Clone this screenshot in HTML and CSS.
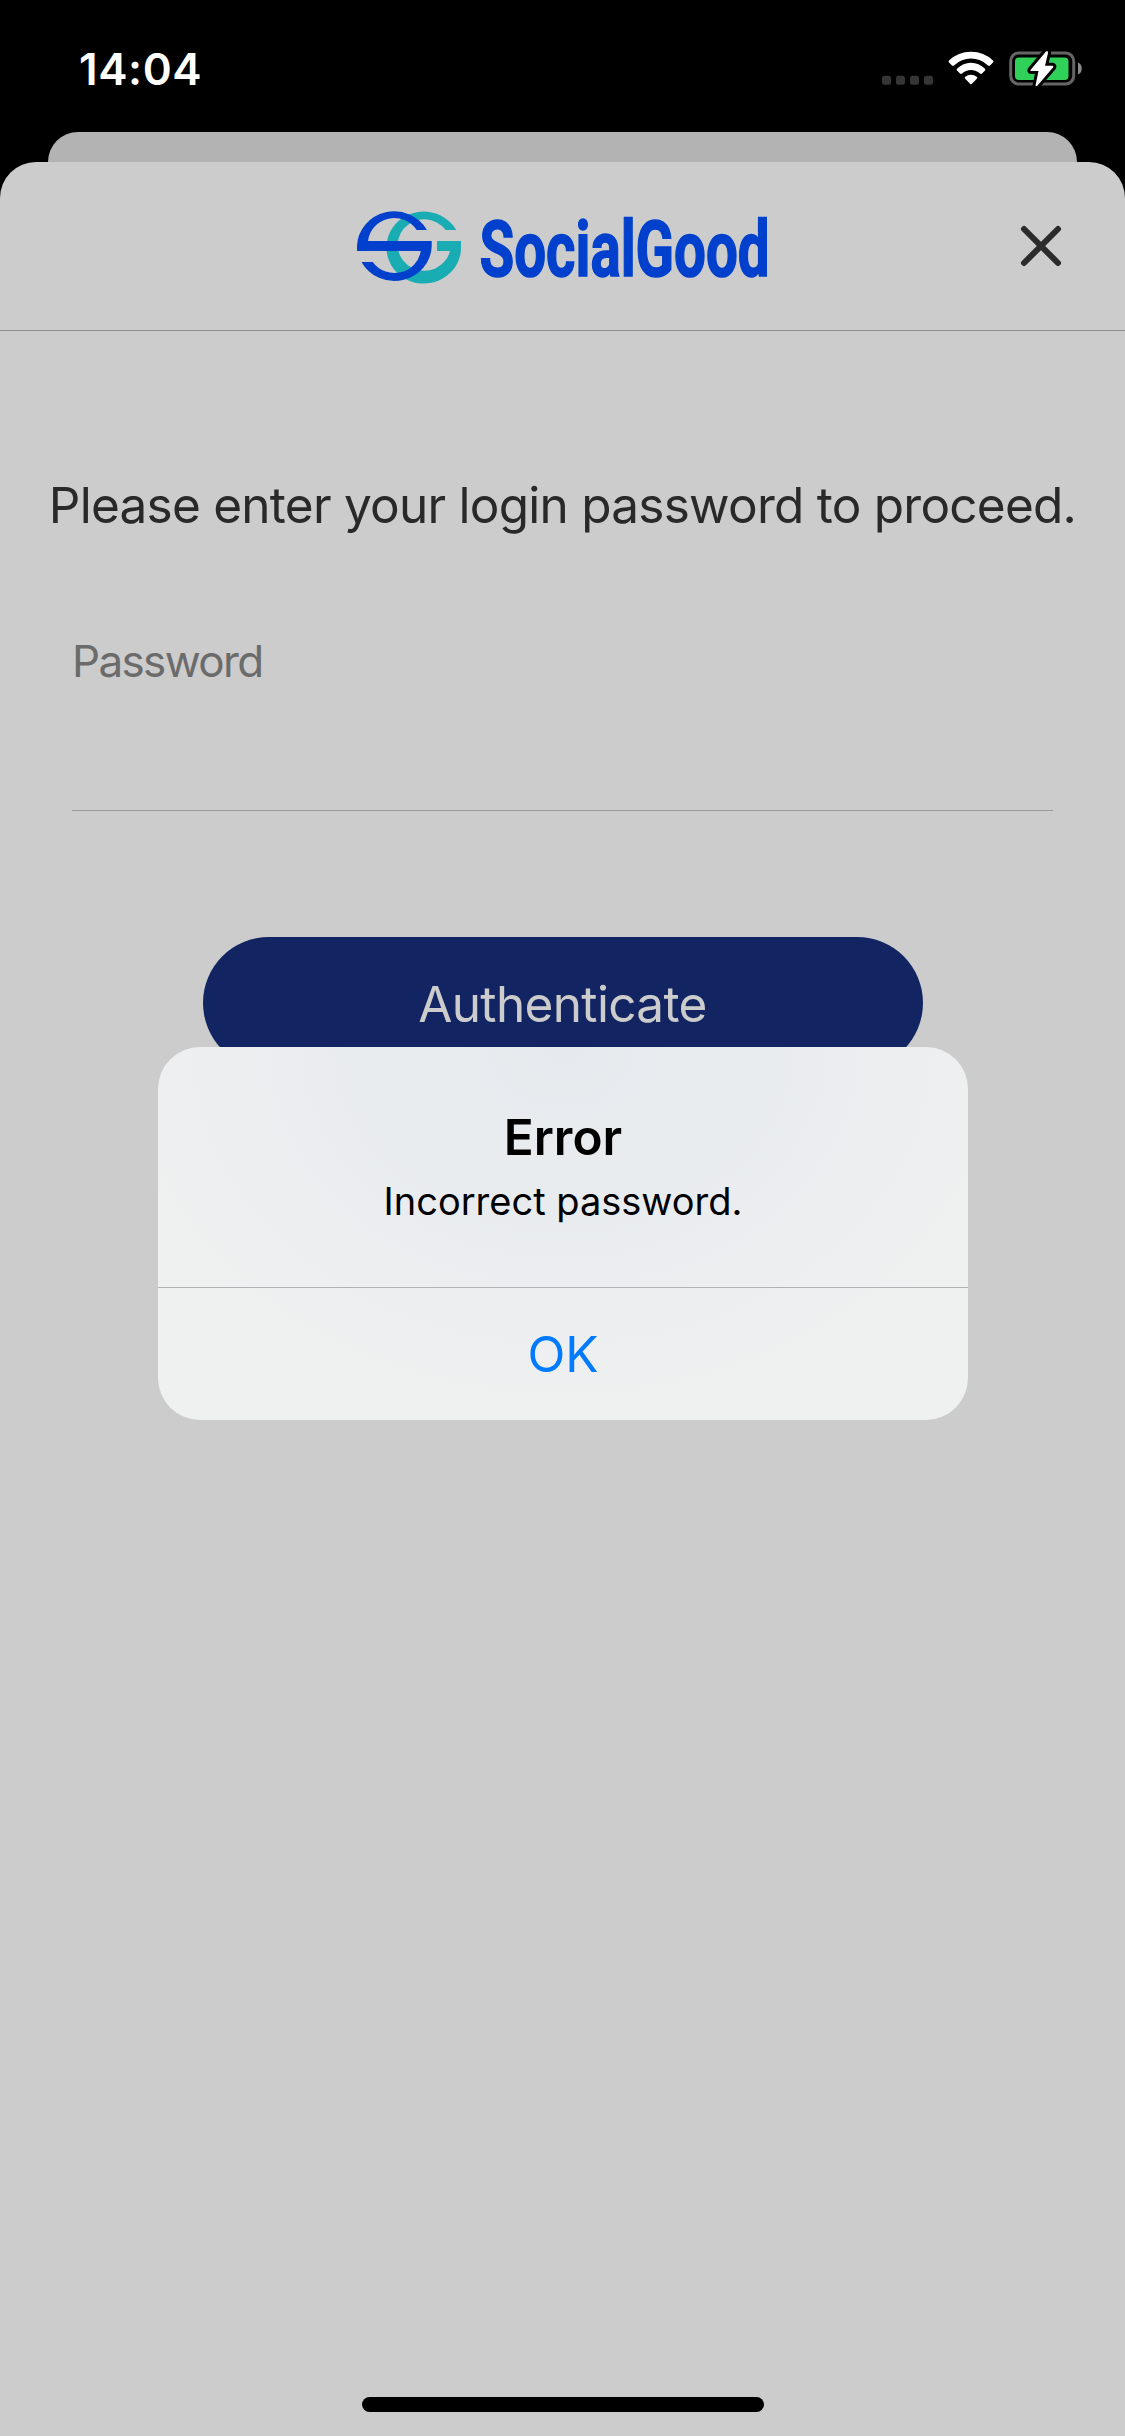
FILE: index.html
```html
<!DOCTYPE html>
<html lang="en">
<head>
<meta charset="utf-8">
<title>SocialGood</title>
<link rel="stylesheet" href="styles.css">
</head>
<body>
<div class="screen">
  <div class="status-bar">
    <span class="time">14:04</span>
    <svg class="status-icons" width="204" height="44" viewBox="0 0 204 44">
      <g fill="#353535"><rect y="28.700" width="9" height="9" rx="2.500"/><rect x="14" y="28.700" width="9" height="9" rx="2.500"/><rect x="28" y="28.700" width="9" height="9" rx="2.500"/><rect x="42" y="28.700" width="9" height="9" rx="2.500"/></g>
      <g fill="#fff">
        <path d="M67 15.500Q66 14.500 67 13.500Q76 4.700 89 4.700T111 13.500Q112 14.500 111 15.500L108 18.500Q107 19.300 106 18.500Q98.500 11.600 89 11.600T72 18.500Q71 19.300 70 18.500Z"/>
        <path d="M75 23.500Q74.200 22.700 75 21.800Q81 15.700 89 15.700T103 21.800Q103.800 22.700 103 23.500L100 26.600Q99 27.400 98 26.600Q94.200 23 89 23T80 26.600Q79 27.400 78 26.600Z"/>
        <path d="M83 31.500Q82.300 30.500 83.300 29.700Q85.800 27.700 89 27.700T94.700 29.700Q95.700 30.500 95 31.500L89.700 37Q89 37.600 88.300 37Z"/>
      </g>
      <rect x="128.700" y="6" width="63" height="31" rx="8" fill="none" stroke="#656565" stroke-width="3"/>
      <path d="M196 15.500C201 17 201 26 196 27.500Z" fill="#8b8b8b"/>
      <rect x="133" y="10.500" width="53.500" height="22.500" rx="4" fill="#30d158"/>
      <path d="M164 4.500L148.500 23Q148 24 149 24H156.500L153.500 38.500Q154 40 155.500 38.500L171 20.500Q172 19 170.500 18.700H163L166 6Q166 3 164 4.500Z" fill="#fff" stroke="#000" stroke-width="6" paint-order="stroke" stroke-linejoin="round"/>
    </svg>
  </div>
  <div class="back-sheet"></div>
  <main class="sheet">
    <header class="header">
      <svg class="logo" width="430" height="100" viewBox="0 0 430 100" role="img" aria-label="SocialGood">
        <path fill="#1aacb3" d="M99.300 20A37.300 36 0 1 0 104 36V31H80V41H93A26.500 25.700 0 1 1 88.700 20Z"/>
        <path fill="#0040cc" d="M0 41V36A37.300 36 0 0 1 70 20H59.700A26.500 25.700 0 0 0 11 31H74.700V36A37.300 36 0 0 1 4.500 52H15.700A26.500 25.700 0 0 0 63.700 41Z"/>
        <text class="wordmark" x="122.500" y="66" textLength="290" lengthAdjust="spacingAndGlyphs">SocialGood</text>
      </svg>
      <svg class="close" width="42" height="42" viewBox="0 0 42 42"><path d="M4 4L38 38M38 4L4 38"/></svg>
    </header>
    <p class="prompt">Please enter your login password to proceed.</p>
    <div class="field"><span class="field-label">Password</span></div>
    <div class="submit"><span>Authenticate</span></div>
    <div class="home-indicator"></div>
  </main>
  <section class="dialog">
    <div class="dialog-body">
      <h1 class="dialog-title">Error</h1>
      <p class="dialog-text">Incorrect password.</p>
    </div>
    <div class="dialog-action"><span>OK</span></div>
  </section>
</div>
</body>
</html>
```
FILE: styles.css
```css
* { box-sizing: border-box; }

body {
  margin: 0;
  background: #000;
  font-family: Inter, "Liberation Sans", sans-serif;
}

h1, p { margin: 0; }

.screen {
  position: relative;
  display: flex;
  flex-direction: column;
  width: 1125px;
  height: 2436px;
  overflow: hidden;
  background: #000;
}

.status-bar {
  display: flex;
  flex: none;
  justify-content: space-between;
  height: 132px;
  padding: 47px 39px 0 79px;
}

.time {
  color: #fff;
  font-size: 44px;
  font-weight: 600;
  line-height: 44px;
  letter-spacing: 0.600px;
}

.status-icons { display: block; }

.back-sheet {
  flex: none;
  height: 30px;
  margin: 0 48px;
  border-radius: 30px 30px 0 0;
  background: #b3b3b3;
}

.sheet {
  display: flex;
  flex: 1;
  flex-direction: column;
  align-items: center;
  border-radius: 36px 36px 0 0;
  background: #ccc;
}

.header {
  display: flex;
  justify-content: space-between;
  width: 100%;
  height: 169px;
  padding: 48px 63px 0 357px;
  border-bottom: 1px solid #8f8f8f;
}

.logo {
  margin-top: -0.500px;
  overflow: visible;
}

.wordmark {
  fill: #0040cc;
  stroke: #0040cc;
  stroke-width: 1.500px;
  font-family: Roboto, sans-serif;
  font-size: 78px;
  font-weight: 700;
}

.close {
  margin-top: 15px;
  fill: none;
  stroke: #2b2b2b;
  stroke-width: 6px;
  stroke-linecap: round;
}

.prompt {
  margin-top: 144px;
  color: #292929;
  font-size: 49.500px;
  line-height: 60px;
  letter-spacing: -0.750px;
  white-space: nowrap;
}

.field {
  width: 981px;
  height: 176px;
  margin-top: 100px;
  border-bottom: 1px solid #999;
}

.field-label {
  color: #6b6b6b;
  font-size: 44px;
  line-height: 52px;
  letter-spacing: -1.650px;
}

.submit {
  display: flex;
  justify-content: center;
  width: 720px;
  height: 132px;
  margin-top: 126px;
  padding-top: 37px;
  border-radius: 66px;
  background: #122562;
  color: #ccc;
  font-size: 49.500px;
  line-height: 60px;
  letter-spacing: -0.650px;
}

.home-indicator {
  width: 402px;
  height: 15px;
  margin-top: auto;
  margin-bottom: 24px;
  border-radius: 8px;
  background: #000;
}

.dialog {
  position: absolute;
  top: 1047px;
  left: 158px;
  width: 810px;
  height: 373px;
  border-radius: 42px;
  background: radial-gradient(ellipse 460px 370px at 50% 0, #e6eaee 0%, #e9ecef 45%, #eff0f0 100%);
  text-align: center;
}

.dialog-body {
  height: 241px;
  padding-top: 60px;
  border-bottom: 1px solid #b2b3b4;
}

.dialog-title {
  font-size: 49.500px;
  font-weight: 600;
  line-height: 60px;
}

.dialog-text {
  margin-top: 11px;
  font-size: 38px;
  line-height: 46px;
}

.dialog-action {
  padding-top: 36px;
  color: #007aff;
  font-size: 49.500px;
  line-height: 60px;
}
```
